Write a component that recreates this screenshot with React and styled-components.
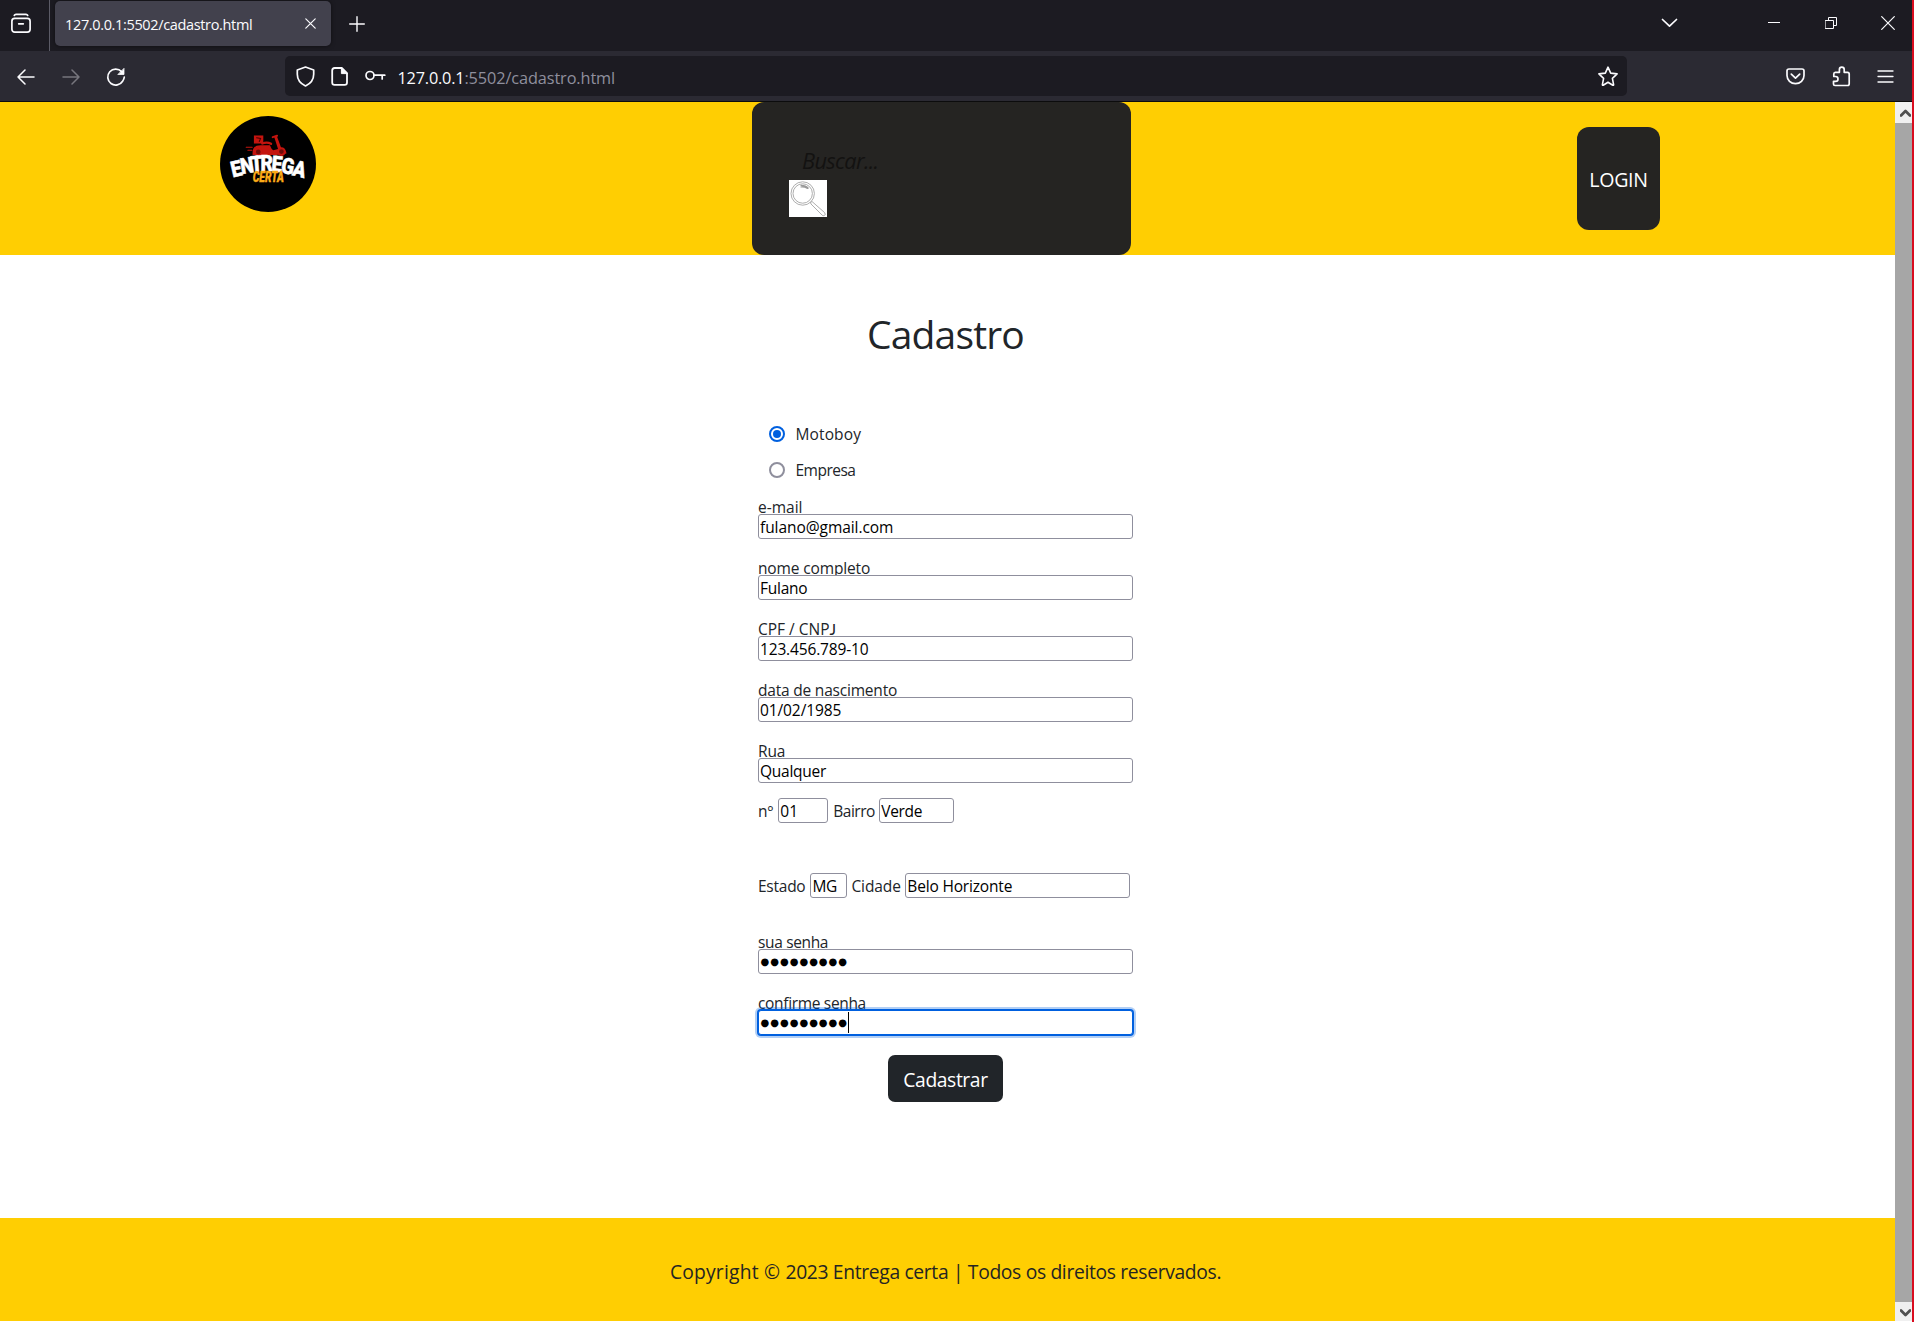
import React from "react";
import styled, { createGlobalStyle } from "styled-components";

const Global = createGlobalStyle`
  * { box-sizing: border-box; }
  body { margin: 0; background: #fff; font-family: "Open Sans", "Noto Sans", sans-serif; color: #212529; overflow: hidden; }
`;

const Screen = styled.div`
  display: flex;
  width: 1914px;
  height: 1322px;
  border-right: 2px solid #d90d1f;
`;
const Window = styled.div`
  flex: 1;
  display: flex;
  flex-direction: column;
  min-width: 0;
`;

/* ---- browser chrome ---- */
const TabStrip = styled.div`
  display: flex;
  align-items: flex-start;
  height: 51px;
  background: #1c1b22;
`;
const NavBar = styled.div`
  display: flex;
  align-items: center;
  height: 51px;
  background: #2b2a33;
  border-bottom: 1px solid #0c0c0d;
`;
const LibraryCell = styled.div`
  width: 50px;
  height: 51px;
  padding: 13px 0 0 11px;
  border-right: 1px solid #5b5b66;
`;
const Tab = styled.div`
  display: flex;
  justify-content: space-between;
  width: 276px;
  height: 45px;
  margin: 1px 0 0 5px;
  padding: 0 15px 0 10px;
  border-radius: 5px;
  background: #42414d;
  box-shadow: 0 0 4px rgba(0, 0, 0, 0.5);
`;
const TabTitle = styled.span`
  font-size: 14.5px;
  line-height: 48px;
  letter-spacing: -0.35px;
  color: #fbfbfe;
  white-space: nowrap;
`;
const UrlBar = styled.div`
  display: flex;
  align-items: center;
  width: 1342px;
  height: 40px;
  margin-left: 159px;
  padding-left: 11px;
  border-radius: 5px;
  background: #1c1b22;
`;
const Url = styled.span`
  flex: 1;
  margin: 3px 0 0 11.5px;
  font-size: 16.3px;
  line-height: 24px;
  letter-spacing: -0.1px;
  color: #8f8f9d;
`;
const Host = styled.span`
  letter-spacing: -0.2px;
  color: #fbfbfe;
`;
const Glyph = styled.svg`
  display: block;
  flex: none;
  width: ${(p) => p.$w}px;
  height: ${(p) => p.$h}px;
  margin-left: ${(p) => p.$ml || 0}px;
  margin-top: ${(p) => p.$mt || 0}px;
  fill: none;
  stroke: ${(p) => p.$c || "#fbfbfe"};
  stroke-width: ${(p) => p.$sw || 1.5};
  stroke-linecap: round;
  stroke-linejoin: round;
`;
const Icon = ({ w, h, ml, mt, sw, c, children }) => (
  <Glyph $w={w} $h={h} $ml={ml} $mt={mt} $sw={sw} $c={c} viewBox={`0 0 ${w} ${h}`}>
    {children}
  </Glyph>
);

/* ---- page ---- */
const Viewport = styled.div`
  display: flex;
  height: 1219px;
`;
const Page = styled.div`
  display: flex;
  flex-direction: column;
  width: 1895px;
`;
const ScrollBar = styled.div`
  display: flex;
  flex-direction: column;
  justify-content: space-between;
  width: 17px;
  background: #a6a6a6;
`;
const ScrollButton = styled.div`
  display: flex;
  justify-content: center;
  align-items: center;
  height: ${(p) => p.$h}px;
  padding-left: 4px;
  background: #f0f0f0;
`;
const Header = styled.header`
  display: flex;
  align-items: flex-start;
  height: 153px;
  background: #ffce02;
`;
const Logo = styled.svg`
  display: block;
  width: 96px;
  height: 96px;
  margin: 14px 0 0 220px;
`;
const SearchBox = styled.div`
  width: 379px;
  height: 153px;
  margin-left: 436px;
  padding: 42px 37px 0;
  border-radius: 12px;
  background: #252422;
`;
const SearchHint = styled.div`
  height: 36px;
  padding-left: 13px;
  font-size: 21.7px;
  font-style: italic;
  line-height: 34px;
  letter-spacing: -0.6px;
  color: #131211;
`;
const SearchPicture = styled.svg`
  display: block;
  width: 38px;
  height: 37px;
  background: #fff;
`;
const Login = styled.button`
  width: 83px;
  height: 103px;
  margin: 25px 0 0 446px;
  padding: 2px 0 0;
  border: 0;
  border-radius: 12px;
  background: #252422;
  color: #fff;
  font-family: inherit;
  font-size: 19.6px;
  letter-spacing: -0.3px;
`;
const Main = styled.main`
  display: flex;
  flex-direction: column;
  align-items: center;
  height: 963px;
  padding-right: 4px;
`;
const Title = styled.h1`
  margin: 55px 0 0;
  font-size: 39px;
  font-weight: 400;
  line-height: 48px;
  letter-spacing: -0.85px;
`;
const Form = styled.form`
  display: flex;
  flex-direction: column;
  width: 375px;
  margin-top: 64px;
`;
const Options = styled.div`
  display: flex;
  flex-direction: column;
  gap: 12px;
  margin-bottom: 13px;
`;
const RadioRow = styled.label`
  display: flex;
  align-items: center;
  height: 24px;
  padding-left: 11px;
  font-size: 15.5px;
  letter-spacing: ${(p) => p.$ls || 0}px;
`;
const Radio = styled.input`
  appearance: none;
  width: 16px;
  height: 16px;
  margin: 0 10.5px 0 0;
  border: 2px solid ${(p) => (p.defaultChecked ? "#0060df" : "#8f8f9d")};
  border-radius: 50%;
  background: ${(p) => (p.defaultChecked ? "#0060df" : "#fff")};
  background-clip: content-box;
  padding: 2px;
`;
const FieldGroup = styled.div`
  display: flex;
  flex-direction: column;
  margin-bottom: ${(p) => p.$mb ?? 17}px;
`;
const Label = styled.label`
  height: ${(p) => (p.$inline ? 25 : 19)}px;
  font-size: 15.5px;
  line-height: 24px;
  letter-spacing: ${(p) => p.$ls || 0}px;
  margin-left: ${(p) => p.$ml || 0}px;
  padding-top: ${(p) => (p.$inline ? 1 : 0)}px;
  white-space: nowrap;
`;
const ShortJ = styled.span`
  font-family: Lato, sans-serif;
`;
const Input = styled.input`
  position: relative;
  width: ${(p) => p.$w || 375}px;
  height: 25px;
  margin-left: ${(p) => p.$ml || 0}px;
  padding: 1px 1px 0;
  border: 1px solid #8f8f9d;
  border-radius: 3px;
  background: #fff;
  color: #000;
  font-family: inherit;
  font-size: 15.5px;
  letter-spacing: ${(p) => p.$ls || 0}px;
`;
const Secret = styled.div`
  position: relative;
  display: flex;
  align-items: center;
  height: 25px;
  padding-left: 1.5px;
  border: 1px solid ${(p) => (p.$focus ? "#0060df" : "#8f8f9d")};
  border-radius: 3px;
  background: #fff;
  box-shadow: ${(p) => (p.$focus ? "0 0 0 1px #0060df, 0 0 0 3px rgba(0, 96, 223, 0.3)" : "none")};
  color: #000;
`;
const Dots = styled.span`
  font-family: "DejaVu Sans", sans-serif;
  font-size: 10px;
  line-height: 20px;
  letter-spacing: 1px;
  padding-top: 1px;
`;
const Caret = styled.span`
  width: 1px;
  height: 21px;
  background: #000;
`;
const InlineRow = styled.div`
  display: flex;
  margin-top: ${(p) => p.$mt}px;
  margin-bottom: ${(p) => p.$mb || 0}px;
`;
const Submit = styled.button`
  align-self: center;
  width: 115px;
  height: 47px;
  margin-top: 3px;
  padding: 2px 0 0;
  border: 0;
  border-radius: 7px;
  background: #212529;
  color: #fff;
  font-family: inherit;
  font-size: 19.3px;
  letter-spacing: -0.4px;
`;
const Footer = styled.footer`
  height: 103px;
  padding: 39px 4px 0 0;
  background: #ffce02;
  color: #252422;
  font-size: 19.3px;
  line-height: 30px;
  letter-spacing: -0.34px;
  text-align: center;
`;
const Mark = styled.span`
  letter-spacing: 0.2px;
`;

const ARC = [
  ["E", 65, 171, -13],
  ["N", 97, 162, -9],
  ["T", 126, 157, -4],
  ["R", 156, 154, 0],
  ["E", 187, 157, 5],
  ["G", 219, 163, 9],
  ["A", 254, 172, 14],
];

const Brand = () => (
  <Logo viewBox="17 14 286 286">
    <circle cx="160" cy="157" r="143" fill="#000" />
    <g fill="#c4140e" stroke="#c4140e" strokeLinecap="round">
      <path d="M118 72h28v24h-28z" stroke="none" />
      <path d="M126 79l12 2-4 9" fill="none" stroke="#400" strokeWidth="3" />
      <path d="M114 124c0-16 8-23 24-23h28c3 8 5 13 10 15l14-4-12-37 8-2 14 38c10 2 15 8 15 15l-30 4h-71z" stroke="none" />
      <path d="M143 96q14-6 26 1" strokeWidth="7" fill="none" />
      <path d="M174 77l13-4" strokeWidth="6" />
      <path d="M95 107h18M100 116h12" strokeWidth="3" />
      <circle cx="131" cy="121" r="10" strokeWidth="6" fill="#700a07" />
      <circle cx="200" cy="120" r="10" strokeWidth="6" fill="#700a07" />
    </g>
    <g fill="#fff" stroke="#fff" strokeWidth="1.5" fontFamily="Roboto, sans-serif" fontWeight="900" fontSize="66" textAnchor="middle">
      {ARC.map(([ch, x, y, r], i) => (
        <text key={i} transform={`translate(${x} ${y}) rotate(${r}) scale(.86 1)`} y="23">{ch}</text>
      ))}
    </g>
    <text x="161" y="210" fill="#fbab18" stroke="#fbab18" fontFamily="Roboto, sans-serif" fontWeight="900" fontStyle="italic" fontSize="42" textAnchor="middle" textLength="93" lengthAdjust="spacingAndGlyphs">CERTA</text>
  </Logo>
);

const FIELDS = [
  ["e-mail", "fulano@gmail.com", 0, -0.06],
  ["nome completo", "Fulano", -0.14, -0.25],
  ["CPF / CNP", "123.456.789-10", 0, -0.16],
  ["data de nascimento", "01/02/1985", -0.2, -0.1],
  ["Rua", "Qualquer", -0.1, -0.25],
];

export default function App() {
  return (
    <Screen>
      <Global />
      <Window>
        <TabStrip>
          <LibraryCell>
            <Icon w={20} h={20} sw={1.7}>
              <rect x="0.9" y="5.4" width="18.2" height="13.7" rx="2.8" />
              <path d="M3.3 2.4Q3.8 1.3 5 1.3h10q1.2 0 1.7 1.1M7.7 10.8h4.6" />
            </Icon>
          </LibraryCell>
          <Tab>
            <TabTitle>127.0.0.1:5502/cadastro.html</TabTitle>
            <Icon w={11} h={11} mt={17} sw={1.2}><path d="M.8.8l9.4 9.4M10.2.8L.8 10.2" /></Icon>
          </Tab>
          <Icon w={16} h={16} ml={18} mt={16} sw={1.4}><path d="M8 .7v14.6M.7 8h14.6" /></Icon>
          <Icon w={17} h={10} ml={1296} mt={18} sw={1.7}><path d="M1.5 1.5l7 6.7 7-6.7" /></Icon>
          <Icon w={12} h={2} ml={90} mt={22} sw={1}><path d="M0 .5h12" /></Icon>
          <Icon w={13} h={13} ml={45} mt={17} sw={1}>
            <path d="M.5 3.5h8v8h-8zM3.5 3.5v-3h8v8h-3" />
          </Icon>
          <Icon w={14} h={14} ml={43} mt={16} sw={1.2}><path d="M.7.7l12.6 12.6M13.3.7L.7 13.3" /></Icon>
        </TabStrip>
        <NavBar>
          <Icon w={18} h={16} ml={17} mt={1}><path d="M17 8H1M8 1L1 8l7 7" /></Icon>
          <Icon w={18} h={16} ml={27} mt={1} c="#77767e"><path d="M1 8h16M10 1l7 7-7 7" /></Icon>
          <Icon w={20} h={20} ml={26} mt={2} sw={1.7}>
            <path d="M16.6 14.2A8 8 0 1 1 15.6 4.6M18.3 10a8 8 0 0 1-1.7 4.2" />
            <path d="M18 1.7v5.8h-5.8z" fill="#fbfbfe" strokeWidth="0.8" />
          </Icon>
          <UrlBar>
            <Icon w={19} h={21} sw={1.7}>
              <path d="M9.5 1L1.3 4v4.2c0 5 3.3 9.4 8.2 11.8 4.9-2.4 8.2-6.8 8.2-11.8V4z" />
            </Icon>
            <Icon w={17} h={19} ml={16} sw={1.8}>
              <path d="M3.6 1h7.2L16 6.2v9.2q0 2.4-2.4 2.4H3.6Q1.2 17.8 1.2 15.4V3.4Q1.2 1 3.6 1z" />
              <path d="M10.4 1v5.6H16z" fill="#fbfbfe" strokeWidth="1" />
            </Icon>
            <Icon w={21} h={12} ml={17} sw={1.7}>
              <circle cx="5" cy="5.5" r="4" />
              <path d="M9 5.2h10.8M17.2 5.5v3.5" />
            </Icon>
            <Url><Host>127.0.0.1</Host>:5502/cadastro.html</Url>
            <Icon w={22} h={21} sw={1.6}>
              <path d="M11 1.2l2.7 5.9 6.4.8-4.7 4.4 1.2 6.4q.1.9-.8.5L11 16.2l-4.8 3q-.9.4-.8-.5l1.2-6.4-4.7-4.4 6.4-.8z" />
            </Icon>
            <Icon w={8} h={1} />
          </UrlBar>
          <Icon w={19} h={17} ml={159} sw={1.7}>
            <path d="M3 1h13q2 0 2 2v4.5a8.5 8.2 0 0 1-17 0V3q0-2 2-2zM5.3 6.2l4.2 4 4.2-4" />
          </Icon>
          <Icon w={19} h={21} ml={27} sw={1.7}>
            <path d="M3 19.5h12.5q1.7 0 1.7-1.7V8q0-1.7-1.7-1.7h-3.3V3.6a2.4 2.4 0 0 0-4.8 0v2.7H3.3Q1.8 6.3 1.8 8v2.5h1.8a2.4 2.4 0 0 1 0 4.8H1.5V18q0 1.5 1.5 1.5z" />
          </Icon>
          <Icon w={17} h={13} ml={26} sw={1.3}><path d="M1 1h15M1 6.5h15M1 12h15" /></Icon>
        </NavBar>
        <Viewport>
          <Page>
            <Header>
              <Brand />
              <SearchBox>
                <SearchHint>Buscar...</SearchHint>
                <SearchPicture viewBox="0 0 38 37" fill="none" stroke="#999" strokeWidth="0.8">
                  <circle cx="13.7" cy="13.5" r="11.7" />
                  <circle cx="13.7" cy="13.5" r="9.7" />
                  <path d="M21.5 22.5l1.5-1 12.5 11q2 2.5-.7 3.2-1 .1-1.7-.6L22 24z" />
                  <path d="M11.5 5.5q5-.3 8 3M11.5 7q4-.5 7 1.5" strokeWidth="1.2" />
                </SearchPicture>
              </SearchBox>
              <Login type="button">LOGIN</Login>
            </Header>
            <Main>
              <Title>Cadastro</Title>
              <Form>
                <Options>
                  <RadioRow $ls={0.12}><Radio type="radio" name="kind" defaultChecked />Motoboy</RadioRow>
                  <RadioRow $ls={-0.5}><Radio type="radio" name="kind" />Empresa</RadioRow>
                </Options>
                {FIELDS.map(([label, value, ls, vls], i) => (
                  <FieldGroup key={label} $mb={i === 4 ? 0 : 17}>
                    <Label $ls={ls}>{label}{i === 2 && <ShortJ>J</ShortJ>}</Label>
                    <Input defaultValue={value} $ls={vls} />
                  </FieldGroup>
                ))}
                <InlineRow $mt={15}>
                  <Label $inline>nº</Label>
                  <Input defaultValue="01" $w={50} $ml={5} />
                  <Label $inline $ml={5} $ls={-0.5}>Bairro</Label>
                  <Input defaultValue="Verde" $w={75} $ml={4.5} $ls={-0.35} />
                </InlineRow>
                <InlineRow $mt={50} $mb={32}>
                  <Label $inline $ls={-0.25}>Estado</Label>
                  <Input defaultValue="MG" $w={37} $ml={5} $ls={-0.5} />
                  <Label $inline $ml={4} $ls={-0.1}>Cidade</Label>
                  <Input defaultValue="Belo Horizonte" $w={225} $ml={4.5} $ls={-0.17} />
                </InlineRow>
                <FieldGroup>
                  <Label $ls={-0.35}>sua senha</Label>
                  <Secret><Dots>●●●●●●●●●</Dots></Secret>
                </FieldGroup>
                <FieldGroup>
                  <Label $ls={-0.33}>confirme senha</Label>
                  <Secret $focus><Dots>●●●●●●●●●</Dots><Caret /></Secret>
                </FieldGroup>
                <Submit type="button">Cadastrar</Submit>
              </Form>
            </Main>
            <Footer><Mark>Copyright © </Mark>2023 Entrega certa | Todos os direitos reservados.</Footer>
          </Page>
          <ScrollBar>
            <ScrollButton $h={21}>
              <Icon w={11} h={8} sw={2.8} c="#505050"><path d="M1 6.5L5.5 2 10 6.5" /></Icon>
            </ScrollButton>
            <ScrollButton $h={19}>
              <Icon w={11} h={8} mt={3} sw={2.8} c="#505050"><path d="M1 1.5L5.5 6 10 1.5" /></Icon>
            </ScrollButton>
          </ScrollBar>
        </Viewport>
      </Window>
    </Screen>
  );
}
